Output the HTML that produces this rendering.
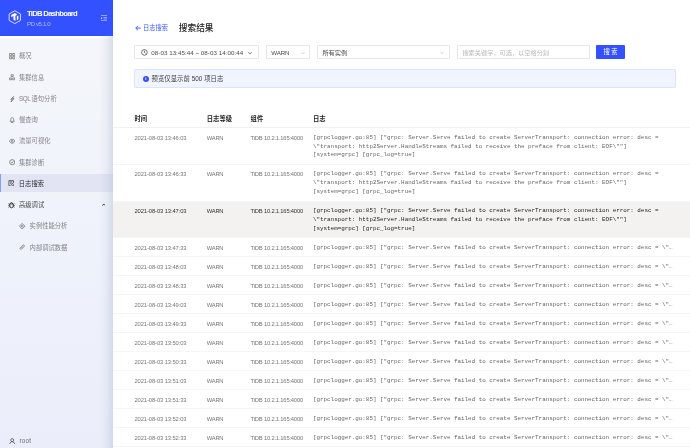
<!DOCTYPE html>
<html lang="zh-CN">
<head>
<meta charset="utf-8">
<title>TiDB Dashboard</title>
<style>
*{box-sizing:border-box;margin:0;padding:0}
html,body{width:690px;height:448px;overflow:hidden;background:#fff}
body{font-family:"Liberation Sans","Noto Sans CJK SC",sans-serif;font-size:6.2px;color:#6b6b6b;position:relative}
.abs{position:absolute;white-space:nowrap}
/* sidebar */
#side{position:absolute;left:0;top:0;width:113px;height:448px;will-change:transform;background:linear-gradient(180deg,#ffffff 36px,#fdfdfb 37.5px,#f4f6fa 39.5px,#eef2fb 58%,#ebeefa 100%);overflow:hidden}
#side:after{content:"";position:absolute;right:0;top:0;width:14px;height:448px;background:linear-gradient(90deg,rgba(170,180,205,0) 0%,rgba(170,180,205,.12) 50%,rgba(170,180,205,.38) 100%)}
#banner{position:absolute;left:0;top:0;width:113px;height:36px;background:#3351ff;z-index:2}
#banner .t1{left:27px;top:8.8px;font-size:7.7px;font-weight:bold;color:#fff;letter-spacing:-.72px;line-height:10px}
#banner .t2{left:27px;top:18.8px;font-size:6.1px;color:rgba(255,255,255,.6);letter-spacing:-.4px;line-height:10px}
.mi{position:absolute;left:0;width:113px;height:18px;line-height:18px;color:#85858b;font-size:6.3px;white-space:nowrap}
.mi span{position:absolute;left:19px;top:0}
.mi svg{position:absolute;left:8.6px;top:5.8px;width:6.4px;height:6.4px}
.mi.sub span{left:29.6px}
.mi.sub svg{left:19.4px}
.mi.sel{background:#e2e4f4;color:#2b2b2b;border-left:1.2px solid #8a9cf6}
.mi.sel span{left:17.8px;top:.5px}.mi.sel svg{left:7.4px}
.mi.grp{color:#4a4a4a}
/* main */
#main{position:absolute;left:113px;top:0;width:577px;height:448px;overflow:hidden;will-change:transform}
.box{position:absolute;border:1px solid #e7e7e7;border-radius:1px;background:#fff;height:14px;top:45.4px}
.box .tx{position:absolute;top:-.9px;line-height:13px;white-space:nowrap;color:#4a4a4a}
table{position:absolute;left:0;top:109.4px;width:577px;border-collapse:collapse;table-layout:fixed}
th{font-weight:bold;color:#222;text-align:left;height:18.5px;padding:0;font-size:6.3px;border-bottom:.6px solid #f0f0f0}
td{vertical-align:top;padding:0;border-bottom:.6px solid #f6f6f6;color:#777;white-space:nowrap}
td div{line-height:8.85px;padding-top:5.3px;font-size:5.8px}
tr.s td{height:19px}
tr.l td{height:36.7px}
tr.hl td{background:#f3f2f1;color:#333}
td.log div{font-family:"Liberation Mono",monospace;font-size:5.885px;line-height:8.85px;color:#666;width:361.5px;overflow:hidden;text-overflow:ellipsis;white-space:nowrap;padding-top:5.3px}
tr.l td.log div{white-space:normal}
tr.hl td.log div{color:#222}
.c1{letter-spacing:-.1px}.c3{letter-spacing:-.19px}.c2{letter-spacing:-.26px}
</style>
</head>
<body>
<div id="side">
  <div id="banner">
    <svg class="abs" style="left:7.8px;top:9.6px;width:13.6px;height:14.4px" viewBox="0 0 28 30"><path d="M14 1.6 L25.8 8.3 V21.7 L14 28.4 L2.2 21.7 V8.3 Z" fill="none" stroke="#e6eaff" stroke-width="1.9" stroke-linejoin="round"/><path d="M6.5 10.2 L14 6 L18 8.3 V10.7 L15.3 12.2 V22.8 L11.2 20.5 V12.6 L6.5 15.2 Z M18.2 13.2 L21.5 11.3 V19.5 L18.2 21.4 Z" fill="#fff"/></svg>
    <div class="abs t1">TiDB Dashboard</div>
    <div class="abs t2">PD v5.1.0</div>
    <svg class="abs" style="left:101px;top:15px;width:6px;height:6px" viewBox="0 0 12 12"><path d="M0 1h12M5 5h7M5 8h7M0 11.2h12" stroke="#c9d1ff" stroke-width="1.3" fill="none"/><path d="M0 4.2 L3.2 6.5 L0 8.8Z" fill="#c9d1ff"/></svg>
  </div>
  <div class="mi" style="top:47.4px"><svg viewBox="0 0 12 12"><path d="M1 1h4v4H1zM7 1h4v4H7zM1 7h4v4H1zM7 7h4v4H7z" fill="none" stroke="#777" stroke-width="1.55"/></svg><span>概况</span></div>
  <div class="mi" style="top:68.6px"><svg viewBox="0 0 12 12"><path d="M4.100 1.300h3.800v3.400H4.100zM1.100 7.400h3.900v3.400H1.100zM7 7.400h3.900v3.400H7z" fill="none" stroke="#777" stroke-width="1.500"/></svg><span>集群信息</span></div>
  <div class="mi" style="top:89.9px"><svg viewBox="0 0 12 12"><path d="M8.600 .9L3.400 6.300h3L3.600 11.200 9.400 5h-3.200z" fill="none" stroke="#777" stroke-width="1.600" stroke-linejoin="round"/></svg><span><i style="font-style:normal;letter-spacing:-.4px">SQL </i>语句分析</span></div>
  <div class="mi" style="top:111.1px"><svg viewBox="0 0 12 12"><path d="M6 1.300c1.900 0 2.700 1.500 2.700 3.100 0 1.900.5 2.800 1.300 3.700H2c.8-.9 1.300-1.800 1.300-3.700C3.300 2.800 4.100 1.300 6 1.300z" fill="none" stroke="#777" stroke-width="1.500" stroke-linejoin="round"/><path d="M4.700 10.300h2.600" stroke="#777" stroke-width="1.600" stroke-linecap="round"/></svg><span>慢查询</span></div>
  <div class="mi" style="top:132.4px"><svg viewBox="0 0 12 12"><path d="M.8 6C2.2 3.4 4 2.3 6 2.3S9.8 3.400 11.200 6C9.800 8.600 8 9.700 6 9.700S2.200 8.600 .8 6z" fill="none" stroke="#777" stroke-width="1.55"/><circle cx="6" cy="6" r="1.700" fill="none" stroke="#777" stroke-width="1.55"/></svg><span>流量可视化</span></div>
  <div class="mi" style="top:153.6px"><svg viewBox="0 0 12 12"><circle cx="6" cy="6" r="4.800" fill="none" stroke="#777" stroke-width="1.55"/><path d="M3.800 6.200l1.600 1.600 2.900-3.400" fill="none" stroke="#777" stroke-width="1.55"/></svg><span>集群诊断</span></div>
  <div class="mi sel" style="top:174.3px"><svg viewBox="0 0 12 12"><path d="M10.300 5.400V1.200H1.700v9.600h3.600M3.800 3.700h4.400M3.800 5.900h2" fill="none" stroke="#333" stroke-width="1.400"/><circle cx="8.200" cy="8.300" r="1.800" fill="none" stroke="#333" stroke-width="1.200"/><path d="M9.500 9.600l1.700 1.700" stroke="#333" stroke-width="1.300"/></svg><span>日志搜索</span></div>
  <div class="mi grp" style="top:196.0px"><svg viewBox="0 0 12 12" style="left:8.400px;top:5.200px;width:7px;height:7.400px"><path d="M3.100 4.600h5.800v3.800a2.900 2.900 0 0 1-5.800 0zM4.100 4.400a1.900 1.900 0 0 1 3.800 0" fill="none" stroke="#3a3a3a" stroke-width="1.700"/><path d="M.7 4.200l2.400 1.400M11.300 4.200l-2.400 1.400M.7 10.400l2.400-1.400M11.300 10.400l-2.400-1.400M.4 7.300h2.700M11.600 7.300H8.900" fill="none" stroke="#3a3a3a" stroke-width="1.200"/></svg><span>高级调试</span><svg style="left:101.700px;top:7px;width:3.600px;height:3.600px" viewBox="0 0 8 8"><path d="M.8 5.800L4 2.200l3.200 3.600" fill="none" stroke="#333" stroke-width="2.100"/></svg></div>
  <div class="mi sub" style="top:217.4px"><svg viewBox="0 0 12 12"><path d="M6 .8L11.200 6 6 11.200 .8 6z" fill="none" stroke="#777" stroke-width="1.55"/><circle cx="6" cy="6" r="1.600" fill="none" stroke="#777" stroke-width="1.55"/></svg><span>实例性能分析</span></div>
  <div class="mi sub" style="top:238.6px"><svg viewBox="0 0 12 12"><path d="M5 7l2-2M4.200 5.400L2.400 7.200a1.700 1.700 0 0 0 2.400 2.400l1.800-1.800M7.800 6.600l1.800-1.800a1.700 1.700 0 0 0-2.400-2.400L5.400 4.200" fill="none" stroke="#777" stroke-width="1.55" stroke-linecap="round"/></svg><span>内部调试数据</span></div>
  <div class="mi" style="top:432.3px;color:#6c6c70"><svg viewBox="0 0 12 12"><circle cx="6" cy="4" r="2.800" fill="none" stroke="#555" stroke-width="1.55"/><path d="M1.400 11.200c.4-2.800 2.200-4.200 4.600-4.200s4.200 1.400 4.600 4.200" fill="none" stroke="#555" stroke-width="1.55"/></svg><span style="left:19.500px;letter-spacing:.2px">root</span></div>
</div>
<div id="main">
  <div class="abs" style="left:21.500px;top:23.200px;line-height:9px;color:#3d5afe;font-size:6.250px"><svg style="width:6.200px;height:6.200px;vertical-align:-0.900px;margin-right:2.300px" viewBox="0 0 10 10"><path d="M9.400 5H1.400M4.800 1.400L1.200 5l3.600 3.600" fill="none" stroke="#3d5afe" stroke-width="1.500"/></svg>日志搜索</div>
  <div class="abs" style="left:65.800px;top:22px;line-height:12px;color:#222;font-size:8.700px;font-weight:500">搜索结果</div>
  <div class="box" style="left:21.300px;width:124.600px"><svg class="abs" style="left:5.800px;top:2.700px;width:6.800px;height:6.800px" viewBox="0 0 12 12"><circle cx="6" cy="6" r="5" fill="none" stroke="#333" stroke-width="1.200"/><path d="M6 2.800V6l2.200 1.400" fill="none" stroke="#333" stroke-width="1.200"/></svg><div class="tx" style="left:16px;letter-spacing:.05px">08-03 13:45:44 ~ 08-03 14:00:44</div><svg class="abs" style="left:112.500px;top:4.600px;width:4px;height:4px" viewBox="0 0 8 8"><path d="M.8 2.400L4 5.800l3.200-3.400" fill="none" stroke="#444" stroke-width="1.500"/></svg></div>
  <div class="box" style="left:153px;width:43.800px"><div class="tx" style="left:4.300px;letter-spacing:-.15px">WARN</div><svg class="abs" style="left:33.500px;top:5px;width:4px;height:4px" viewBox="0 0 8 8"><path d="M.8 2.400L4 5.800l3.200-3.400" fill="none" stroke="#bbb" stroke-width="1.200"/></svg></div>
  <div class="box" style="left:203.800px;width:133px"><div class="tx" style="left:4.600px">所有实例</div><svg class="abs" style="left:122.500px;top:5px;width:4px;height:4px" viewBox="0 0 8 8"><path d="M.8 2.400L4 5.800l3.200-3.400" fill="none" stroke="#bbb" stroke-width="1.200"/></svg></div>
  <div class="box" style="left:343.600px;width:133px"><div class="tx" style="left:4.800px;color:#b8b8b8">搜索关键字，可选，以空格分割</div></div>
  <div class="abs" style="left:483.300px;top:45.200px;width:28.600px;height:14px;background:#3351ff;border-radius:1px;color:#fff;text-align:center;line-height:14.600px;font-size:6.300px;letter-spacing:1.500px;padding-left:1.500px">搜索</div>
  <div class="abs" style="left:21.300px;top:69.300px;width:541.800px;height:18.300px;background:#f0f5ff;border:1px solid #dae5ff;border-radius:1.200px"><div class="abs" style="left:7.500px;top:5.500px;width:5.900px;height:5.900px;border-radius:50%;background:#3351ff;color:#fff;font-size:4.300px;line-height:5.900px;text-align:center;font-weight:bold">i</div><div class="abs" style="left:16.200px;top:0;line-height:18.300px;color:#3a3a3a;font-size:6.350px;letter-spacing:.05px">预览仅显示前 500 项日志</div></div>
  <table>
    <colgroup><col style="width:21.500px"><col style="width:72.300px"><col style="width:43.800px"><col style="width:62.400px"><col></colgroup>
    <tr><th></th><th>时间</th><th>日志等级</th><th>组件</th><th>日志</th></tr>
    <tr class="l"><td></td><td><div class="c1">2021-08-03 13:46:03</div></td><td><div class="c2">WARN</div></td><td><div class="c3">TiDB 10.2.1.165:4000</div></td><td class="log"><div>[grpclogger.go:85] ["grpc: Server.Serve failed to create ServerTransport: connection error: desc = \"transport: http2Server.HandleStreams failed to receive the preface from client: EOF\""] [system=grpc] [grpc_log=true]</div></td></tr>
    <tr class="l"><td></td><td><div class="c1">2021-08-03 13:46:33</div></td><td><div class="c2">WARN</div></td><td><div class="c3">TiDB 10.2.1.165:4000</div></td><td class="log"><div>[grpclogger.go:85] ["grpc: Server.Serve failed to create ServerTransport: connection error: desc = \"transport: http2Server.HandleStreams failed to receive the preface from client: EOF\""] [system=grpc] [grpc_log=true]</div></td></tr>
    <tr class="l hl"><td></td><td><div class="c1">2021-08-03 13:47:03</div></td><td><div class="c2">WARN</div></td><td><div class="c3">TiDB 10.2.1.165:4000</div></td><td class="log"><div>[grpclogger.go:85] ["grpc: Server.Serve failed to create ServerTransport: connection error: desc = \"transport: http2Server.HandleStreams failed to receive the preface from client: EOF\""] [system=grpc] [grpc_log=true]</div></td></tr>
    <tr class="s"><td></td><td><div class="c1">2021-08-03 13:47:33</div></td><td><div class="c2">WARN</div></td><td><div class="c3">TiDB 10.2.1.165:4000</div></td><td class="log"><div>[grpclogger.go:85] ["grpc: Server.Serve failed to create ServerTransport: connection error: desc = \"transport: http2Server.HandleStreams failed to receive the preface from client: EOF\""] [system=grpc] [grpc_log=true]</div></td></tr>
    <tr class="s"><td></td><td><div class="c1">2021-08-03 13:48:03</div></td><td><div class="c2">WARN</div></td><td><div class="c3">TiDB 10.2.1.165:4000</div></td><td class="log"><div>[grpclogger.go:85] ["grpc: Server.Serve failed to create ServerTransport: connection error: desc = \"transport: http2Server.HandleStreams failed to receive the preface from client: EOF\""] [system=grpc] [grpc_log=true]</div></td></tr>
    <tr class="s"><td></td><td><div class="c1">2021-08-03 13:48:33</div></td><td><div class="c2">WARN</div></td><td><div class="c3">TiDB 10.2.1.165:4000</div></td><td class="log"><div>[grpclogger.go:85] ["grpc: Server.Serve failed to create ServerTransport: connection error: desc = \"transport: http2Server.HandleStreams failed to receive the preface from client: EOF\""] [system=grpc] [grpc_log=true]</div></td></tr>
    <tr class="s"><td></td><td><div class="c1">2021-08-03 13:49:03</div></td><td><div class="c2">WARN</div></td><td><div class="c3">TiDB 10.2.1.165:4000</div></td><td class="log"><div>[grpclogger.go:85] ["grpc: Server.Serve failed to create ServerTransport: connection error: desc = \"transport: http2Server.HandleStreams failed to receive the preface from client: EOF\""] [system=grpc] [grpc_log=true]</div></td></tr>
    <tr class="s"><td></td><td><div class="c1">2021-08-03 13:49:33</div></td><td><div class="c2">WARN</div></td><td><div class="c3">TiDB 10.2.1.165:4000</div></td><td class="log"><div>[grpclogger.go:85] ["grpc: Server.Serve failed to create ServerTransport: connection error: desc = \"transport: http2Server.HandleStreams failed to receive the preface from client: EOF\""] [system=grpc] [grpc_log=true]</div></td></tr>
    <tr class="s"><td></td><td><div class="c1">2021-08-03 13:50:03</div></td><td><div class="c2">WARN</div></td><td><div class="c3">TiDB 10.2.1.165:4000</div></td><td class="log"><div>[grpclogger.go:85] ["grpc: Server.Serve failed to create ServerTransport: connection error: desc = \"transport: http2Server.HandleStreams failed to receive the preface from client: EOF\""] [system=grpc] [grpc_log=true]</div></td></tr>
    <tr class="s"><td></td><td><div class="c1">2021-08-03 13:50:33</div></td><td><div class="c2">WARN</div></td><td><div class="c3">TiDB 10.2.1.165:4000</div></td><td class="log"><div>[grpclogger.go:85] ["grpc: Server.Serve failed to create ServerTransport: connection error: desc = \"transport: http2Server.HandleStreams failed to receive the preface from client: EOF\""] [system=grpc] [grpc_log=true]</div></td></tr>
    <tr class="s"><td></td><td><div class="c1">2021-08-03 13:51:03</div></td><td><div class="c2">WARN</div></td><td><div class="c3">TiDB 10.2.1.165:4000</div></td><td class="log"><div>[grpclogger.go:85] ["grpc: Server.Serve failed to create ServerTransport: connection error: desc = \"transport: http2Server.HandleStreams failed to receive the preface from client: EOF\""] [system=grpc] [grpc_log=true]</div></td></tr>
    <tr class="s"><td></td><td><div class="c1">2021-08-03 13:51:33</div></td><td><div class="c2">WARN</div></td><td><div class="c3">TiDB 10.2.1.165:4000</div></td><td class="log"><div>[grpclogger.go:85] ["grpc: Server.Serve failed to create ServerTransport: connection error: desc = \"transport: http2Server.HandleStreams failed to receive the preface from client: EOF\""] [system=grpc] [grpc_log=true]</div></td></tr>
    <tr class="s"><td></td><td><div class="c1">2021-08-03 13:52:03</div></td><td><div class="c2">WARN</div></td><td><div class="c3">TiDB 10.2.1.165:4000</div></td><td class="log"><div>[grpclogger.go:85] ["grpc: Server.Serve failed to create ServerTransport: connection error: desc = \"transport: http2Server.HandleStreams failed to receive the preface from client: EOF\""] [system=grpc] [grpc_log=true]</div></td></tr>
    <tr class="s"><td></td><td><div class="c1">2021-08-03 13:52:33</div></td><td><div class="c2">WARN</div></td><td><div class="c3">TiDB 10.2.1.165:4000</div></td><td class="log"><div>[grpclogger.go:85] ["grpc: Server.Serve failed to create ServerTransport: connection error: desc = \"transport: http2Server.HandleStreams failed to receive the preface from client: EOF\""] [system=grpc] [grpc_log=true]</div></td></tr>
  </table>
</div>
</body>
</html>
